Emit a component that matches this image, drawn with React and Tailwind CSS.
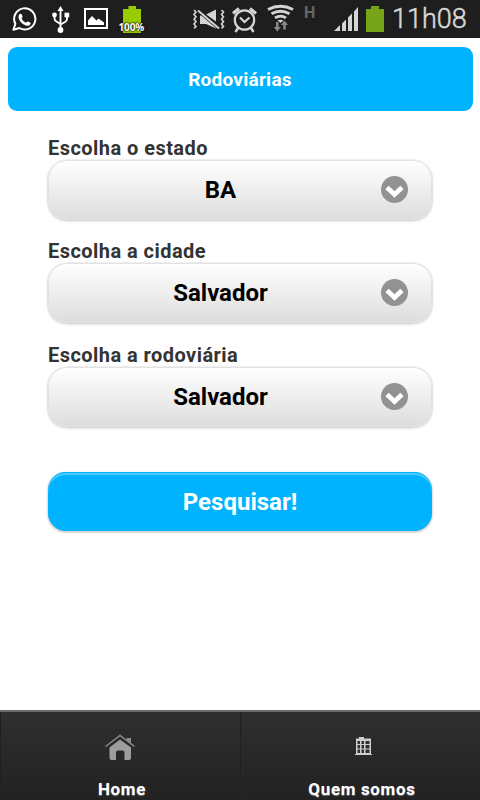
import React from "react";

function WhatsAppIcon() {
  return (
    <svg className="ml-3 h-[38px] w-[26px]" viewBox="12 0 26 38" fill="none">
      <path d="M13.4 29.8 15.4 23.8A10.6 10.6 0 1 1 19.4 28Z" stroke="#fff" strokeWidth="2" strokeLinejoin="round" />
      <path d="M19.2 14.6c.8-1.2 2-1.2 2.4-.4l1 2.4c.2.7-.9 1.5-1 2 .9 2 2.300 3.200 4.300 4.100.600-.2 1.200-1.500 1.900-1.300l2.500 1.200c.8.6-.1 2.500-1.300 3-3.500 1.300-9.800-3.400-10.500-8.100-.1-1.200.2-2.200.7-2.900Z" fill="#fff" />
    </svg>
  );
}

function UsbIcon() {
  return (
    <svg className="ml-[13px] h-[38px] w-[20px]" viewBox="51 0 20 38" fill="none">
      <path d="M60.500 9v21M54.500 15v3.500q0 2 2 3l4 2.500M67 15v4q0 2-2 3l-4.500 2.500" stroke="#fff" strokeWidth="1.900" />
      <path d="m60.500 6 3 5h-6Z" fill="#fff" />
      <circle cx="54.500" cy="15" r="2.400" fill="#fff" />
      <rect x="64.500" y="12.700" width="4.700" height="4.600" fill="#fff" />
      <circle cx="60.500" cy="30" r="2.900" fill="#fff" />
    </svg>
  );
}

function PictureIcon() {
  return (
    <svg className="ml-[13px] h-[38px] w-[24px]" viewBox="84 0 24 38" fill="none">
      <rect x="85" y="9" width="22" height="19" stroke="#fff" strokeWidth="2" />
      <path d="M88 25v-4.500l4-4.500 4.500 4.500 2-2 5.500 4V25Z" fill="#fff" />
    </svg>
  );
}

function VibrateIcon() {
  return (
    <svg className="h-[38px] w-[32px]" viewBox="193 0 32 38" fill="none">
      <path d="m194 10 2 2-2 2.400 2 2.400-2 2.400 2 2.400-2 2.400 2 2.400-2 2M221.500 10l2 2-2 2.400 2 2.400-2 2.400 2 2.400-2 2.400 2 2.400-2 2" stroke="#d5d5d5" strokeWidth="1.600" />
      <path d="M200 15.500h3l13 9v4l-10-4.500H200ZM206 14.500l10-5v12Z" fill="#d5d5d5" />
      <path d="m198 10 21 18" stroke="#1e1e1e" strokeWidth="4" />
      <path d="m198 10.500 21 18" stroke="#d5d5d5" strokeWidth="1.900" />
    </svg>
  );
}

function AlarmIcon() {
  return (
    <svg className="ml-[7px] h-[38px] w-[26px]" viewBox="232 0 26 38" fill="none" stroke="#d5d5d5">
      <circle cx="244.500" cy="20" r="9.700" strokeWidth="2.200" />
      <path d="m240 17.500 4.500 4.500 5-4.500" strokeWidth="2.200" />
      <path d="m233 13.500 6-5M256 13.500l-6-5" strokeWidth="3.200" />
      <path d="m238 28-2.500 4M251 28l2.500 4" strokeWidth="2.400" />
    </svg>
  );
}

function WifiIcon() {
  return (
    <svg className="ml-[9px] h-[38px] w-[28px]" viewBox="267 0 28 38" fill="none">
      <path d="M268 9.500q12.500-6.500 25 0M271.500 13.800q9-5.200 18 0M275 17.900q5.500-3.600 11 0" stroke="#d5d5d5" strokeWidth="2.900" />
      <path d="M277.500 20.300q3-1.300 6 0l-3 2.700Z" fill="#d5d5d5" />
      <path d="M276 22h2.600v5h2.200L277.300 31.500l-3.600-4.500h2.300ZM283.200 29.500h2.600v-4.500h2.200L284.500 20.500l-3.600 4.500h2.300Z" fill="#888" />
    </svg>
  );
}

function SignalIcon() {
  return (
    <svg className="h-[38px] w-[25px]" viewBox="334 0 25 38" fill="#d5d5d5">
      <path d="M334 31h6v-6ZM342 31h4V19.500l-4 4ZM348 31h4V13.500l-4 4ZM354 31h4V7l-4 4.500Z" />
    </svg>
  );
}

function StatusBar() {
  return (
    <div className="flex h-[38px] w-full shrink-0 items-start overflow-hidden bg-[#1e1e1e]">
      <WhatsAppIcon />
      <UsbIcon />
      <PictureIcon />
      <div className="relative ml-[10px] h-[38px] w-[28px]">
        <svg className="h-[38px] w-[28px]" viewBox="118 0 28 38">
          <path d="M123 9h5.500V6h7.500v3h5v24h-18Z" fill="#99cc00" />
        </svg>
        <span className="absolute left-[0.500px] top-[21px] font-['Open_Sans',sans-serif] text-[10px] font-bold leading-[13px] tracking-[-0.1px] text-white [text-shadow:0_0_2px_#000,0_0_2px_#000]">100%</span>
      </div>
      <div className="w-[47px]" />
      <VibrateIcon />
      <AlarmIcon />
      <WifiIcon />
      <span className="ml-[9px] w-[30px] pt-[4px] text-[16px] font-bold leading-[17px] text-[#666]">H</span>
      <SignalIcon />
      <svg className="ml-[7px] h-[38px] w-[18px]" viewBox="366 0 18 38">
        <path d="M366 9h5V6h8v3h5v23h-18Z" fill="#76a318" />
      </svg>
      <span className="ml-[8px] whitespace-nowrap pt-[3px] text-[27px] font-light leading-[32px] text-[#d8d8d8] [-webkit-text-stroke:0.5px_#d8d8d8]">11h08</span>
    </div>
  );
}

function SelectField({ label, value }) {
  return (
    <div className="flex h-[103.500px] flex-col">
      <span className="h-[25px] whitespace-nowrap text-[20px] font-bold leading-[26px] tracking-[0.45px] text-[#333]">{label}</span>
      <div className="flex h-[60px] items-center rounded-[19px] border-[1.5px] border-[#e2e2e2] bg-gradient-to-b from-white to-[#dddddd] pl-[22px] pr-[23px] shadow-[0_1px_3px_rgba(0,0,0,0.2),0_0_1px_1px_rgba(0,0,0,0.04)]">
        <span className="flex-1 text-center text-[24px] font-bold leading-[30px] text-black">{value}</span>
        <svg className="ml-[10px] h-[28px] w-[28px]" viewBox="0 0 28 28" fill="none">
          <circle cx="14.500" cy="13.500" r="13.500" fill="#929292" />
          <path d="m7 11.500 7.500 7 7.500-7" stroke="#fff" strokeWidth="4.800" />
        </svg>
      </div>
    </div>
  );
}

function HomeIcon() {
  return (
    <svg className="mr-[2px] h-[28px] w-[32px]" viewBox="0 0 32 28" fill="none">
      <path d="M1.500 13.500 16 2.500l14.500 11" stroke="#8b8b8d" strokeWidth="1.500" />
      <path d="M22.500 5H27v5.500l-4.500-3.300Z" fill="#8b8b8d" />
      <path d="M5.500 14.500 16 6.500l11 8V25q0 2-2 2h-4.500v-7.500q0-2-2-2H14q-2 0-2 2V27H7.500q-2 0-2-2Z" fill="#9d9d9f" />
    </svg>
  );
}

function BuildingIcon() {
  return (
    <svg className="ml-[4px] h-[18px] w-[17px]" viewBox="0 0 17 18" fill="none">
      <path d="M4 0h5v1.500h7V17h1v1H0v-1h1V1.500h3Z" fill="#cecece" />
      <path d="M2.500 4H5v3H2.500zM6.500 4H9v3H6.500zM10.500 4H14.500v3H10.500zM2.500 8H5v3.500H2.500zM6.500 8H9v3.500H6.500zM10.500 8H14.500v3.500H10.500zM2.500 12.500H5v3.500H2.500zM6.500 12.500H9v3.500H6.500zM10.500 12.500H14.500v3.500H10.500z" fill="#303030" />
    </svg>
  );
}

export default function App() {
  return (
    <main className="flex h-[800px] w-[480px] flex-col overflow-hidden bg-white font-[Roboto,sans-serif]">
      <StatusBar />
      <h1 className="mx-[7.500px] mb-[0.500px] mt-[9px] flex h-[64px] shrink-0 items-center justify-center rounded-[9px] bg-[#00b3ff] pt-[1px] text-[19px] font-bold leading-[24px] tracking-[0.25px] text-white">Rodoviárias</h1>
      <div className="flex flex-1 flex-col px-[48px] pt-[23px]">
        <SelectField label="Escolha o estado" value="BA" />
        <SelectField label="Escolha a cidade" value="Salvador" />
        <SelectField label="Escolha a rodoviária" value="Salvador" />
        <button className="mt-[27px] h-[59px] w-full rounded-[18px] bg-[#00b3ff] text-[24px] font-bold leading-[30px] text-white shadow-[0_1px_3px_rgba(0,0,0,0.3),inset_0_1px_0_#00b3ff,inset_0_3px_0_rgba(255,255,255,0.3)]">Pesquisar!</button>
      </div>
      <nav className="flex h-[90px] shrink-0 border-t-2 border-[#6a6a6a] bg-gradient-to-b from-[#2f2f2f] to-[#222] text-[17px] font-bold leading-[22px] tracking-[0.65px] text-white [text-shadow:0_1px_1px_#777]">
        <a className="flex w-[241px] flex-col items-center border-x border-[#202020] pt-[21px]">
          <HomeIcon />
          <span className="mt-[17px] pl-[3px]">Home</span>
        </a>
        <a className="flex flex-1 flex-col items-center border-l border-[#2a2a2a] pt-[25px]">
          <BuildingIcon />
          <span className="mt-[23px] whitespace-nowrap pl-[2px]">Quem somos</span>
        </a>
      </nav>
    </main>
  );
}
